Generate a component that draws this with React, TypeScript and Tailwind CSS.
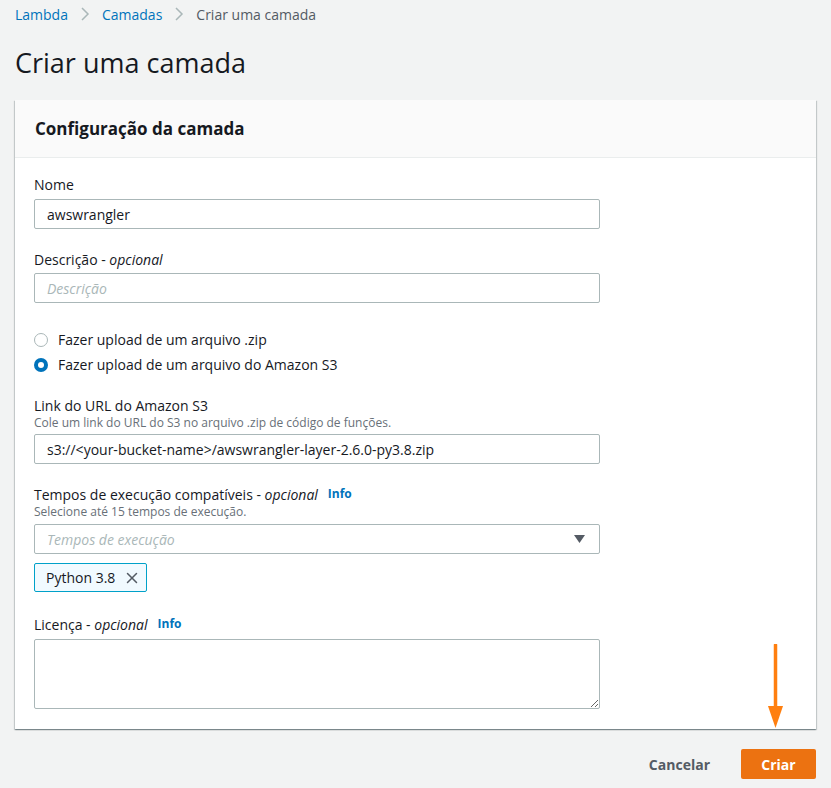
import { X } from 'lucide-react';

function Label({ text, optional, info }: { text: string; optional?: boolean; info?: boolean }) {
  return (
    <div className="flex items-center h-5 text-[14px] text-[#16191f]">
      <span>
        {text}
        {optional && (
          <>
            {' - '}
            <i>opcional</i>
          </>
        )}
      </span>
      {info && <span className="ml-[10px] text-[12px] font-bold text-[#0073bb]">Info</span>}
    </div>
  );
}

function Radio({ checked, label }: { checked?: boolean; label: string }) {
  return (
    <label className="flex items-center h-[25px] gap-[10px] text-[14px] text-[#16191f]">
      {checked ? (
        <span className="w-[14px] h-[14px] rounded-full bg-[#0073bb] flex items-center justify-center">
          <span className="w-[6px] h-[6px] rounded-full bg-white" />
        </span>
      ) : (
        <span className="w-[14px] h-[14px] rounded-full border border-[#aab7b8] bg-white" />
      )}
      <span>{label}</span>
    </label>
  );
}

export default function App() {
  return (
    <div className="relative min-h-[788px] bg-[#f2f3f3] px-[15px] font-['Open_Sans','Liberation_Sans',sans-serif] text-[#16191f]">
      {/* breadcrumb */}
      <div className="flex items-center h-7 text-[14px]">
        <span className="text-[#0073bb]">Lambda</span>
        <svg width="10" height="16" viewBox="0 0 10 16" className="mx-3">
          <path d="M2 2l6 6-6 6" fill="none" stroke="#aab7b8" strokeWidth="1.5" />
        </svg>
        <span className="text-[#0073bb]">Camadas</span>
        <svg width="10" height="16" viewBox="0 0 10 16" className="mx-3">
          <path d="M2 2l6 6-6 6" fill="none" stroke="#aab7b8" strokeWidth="1.5" />
        </svg>
        <span className="text-[#545b64]">Criar uma camada</span>
      </div>

      <h1 className="mt-[17px] text-[27px] leading-9 font-normal">Criar uma camada</h1>

      {/* panel */}
      <div className="mt-[19px] bg-white shadow-[0_1px_1px_0_rgba(0,28,36,0.3),1px_1px_1px_0_rgba(0,28,36,0.15),-1px_1px_1px_0_rgba(0,28,36,0.15)]">
        <div className="h-[58px] flex items-center px-5 bg-[#fafafa] border-b border-[#eaeded]">
          <h2 className="text-[17px] font-bold">Configuração da camada</h2>
        </div>

        <div className="px-[19px] pt-4 pb-5 flex flex-col">
          <Label text="Nome" />
          <input
            className="mt-[5px] w-[566px] h-[30px] border border-[#aab7b8] rounded-[2px] px-3 text-[14px] outline-none"
            defaultValue="awswrangler"
          />

          <div className="mt-5">
            <Label text="Descrição" optional />
          </div>
          <input
            className="mt-[4px] w-[566px] h-[30px] border border-[#aab7b8] rounded-[2px] px-3 text-[14px] italic placeholder:text-[#aab7b8] outline-none"
            placeholder="Descrição"
          />

          <div className="mt-[24px] flex flex-col">
            <Radio label="Fazer upload de um arquivo .zip" />
            <Radio checked label="Fazer upload de um arquivo do Amazon S3" />
          </div>

          <div className="mt-[18px]">
            <Label text="Link do URL do Amazon S3" />
          </div>
          <div className="text-[12px] leading-4 text-[#687078]">Cole um link do URL do S3 no arquivo .zip de código de funções.</div>
          <input
            className="mt-[3px] w-[566px] h-[30px] border border-[#aab7b8] rounded-[2px] px-3 text-[14px] outline-none"
            defaultValue="s3://<your-bucket-name>/awswrangler-layer-2.6.0-py3.8.zip"
          />

          <div className="mt-5">
            <Label text="Tempos de execução compatíveis" optional info />
          </div>
          <div className="text-[12px] leading-4 text-[#687078]">Selecione até 15 tempos de execução.</div>
          <div className="mt-[4px] w-[566px] h-[30px] border border-[#aab7b8] rounded-[2px] pl-3 pr-[14px] flex items-center justify-between">
            <span className="text-[14px] italic text-[#aab7b8]">Tempos de execução</span>
            <svg width="11" height="8" viewBox="0 0 11 8">
              <path d="M0 0h11L5.5 8z" fill="#545b64" />
            </svg>
          </div>

          <div className="mt-[9px] self-start h-[29px] w-[113px] flex items-center gap-2 pl-[11px] border border-[#00a1c9] bg-[#f1faff] rounded-[2px] text-[14px]">
            <span>Python 3.8</span>
            <X size={18} strokeWidth={2} className="text-[#545b64]" />
          </div>

          <div className="mt-[22px]">
            <Label text="Licença" optional info />
          </div>
          <textarea className="mt-[5px] w-[566px] h-[70px] border border-[#aab7b8] rounded-[2px] px-3 py-1 text-[14px] outline-none" />
        </div>
      </div>

      {/* actions */}
      <div className="mt-5 flex justify-end items-center gap-[31px]">
        <span className="text-[14px] font-bold text-[#545b64]">Cancelar</span>
        <button className="w-[75px] h-[30px] rounded-[2px] bg-[#ec7211] text-white text-[14px] font-bold">Criar</button>
      </div>

      {/* annotation arrow */}
      <svg className="absolute left-[766px] top-[644px]" width="20" height="85" viewBox="0 0 20 85">
        <path d="M9.5 1v64" stroke="#ff7f0f" strokeWidth="3.5" strokeLinecap="round" />
        <path d="M2 62h15L9.5 84z" fill="#ff7f0f" />
      </svg>
    </div>
  );
}
